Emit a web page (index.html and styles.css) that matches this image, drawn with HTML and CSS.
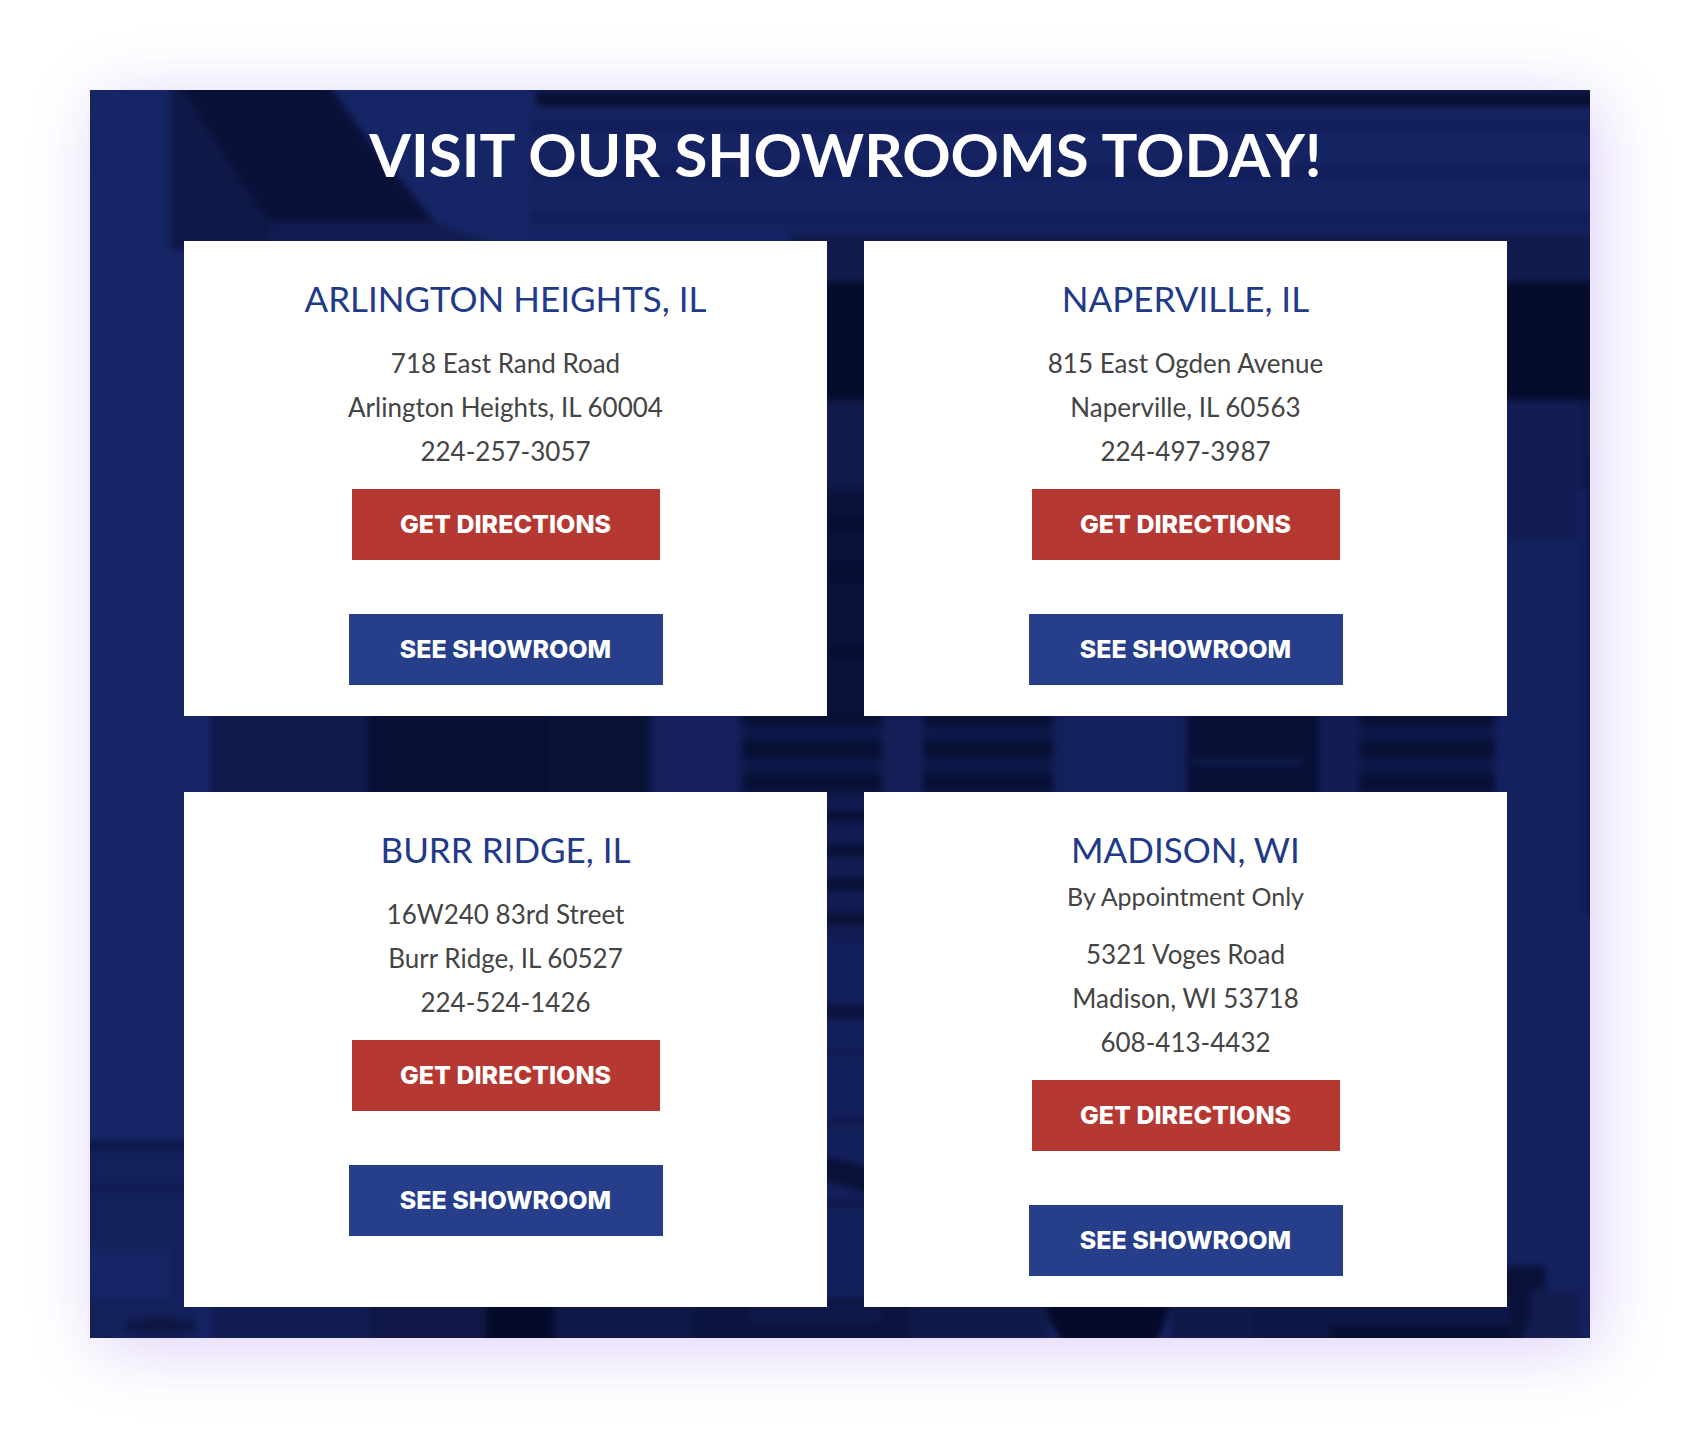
FILE: index.html
```html
<!doctype html>
<html lang="en">
  <head>
    <meta charset="UTF-8" />
    <meta name="viewport" content="width=device-width, initial-scale=1.0" />
    <title>Visit Our Showrooms Today!</title>
    <link rel="stylesheet" href="styles.css">
  </head>
  <body>
    <section class="showrooms">
      <!-- tinted storefront behind the cards -->
      <svg class="backdrop" viewBox="0 0 1500 1248" preserveAspectRatio="none" aria-hidden="true">
        <defs>
          <pattern id="siding" width="40" height="46" patternUnits="userSpaceOnUse">
            <rect width="40" height="46" fill="#152363" />
            <rect y="30" width="40" height="12" fill="#121e58" />
          </pattern>
          <pattern id="shutter" width="40" height="33" y="636" patternUnits="userSpaceOnUse">
            <rect width="40" height="33" fill="#0e1848" />
            <rect y="15" width="40" height="17" fill="#071034" />
          </pattern>
          <pattern id="blinds" width="40" height="34" y="702" patternUnits="userSpaceOnUse">
            <rect width="40" height="34" fill="#111c52" />
            <rect y="18" width="40" height="13" fill="#0a1239" />
          </pattern>
          <filter id="soft" x="0" y="0" width="1" height="1" color-interpolation-filters="sRGB">
            <feGaussianBlur stdDeviation="3" />
          </filter>
        </defs>
        <rect width="1500" height="1248" fill="#162566" />
        <g filter="url(#soft)">
          <rect x="-10" y="-10" width="1520" height="1268" fill="#162566" />
          <rect x="440" y="0" width="1070" height="150" fill="url(#siding)" />
          <rect x="443" y="-10" width="1070" height="14" fill="#111b50" />
          <rect x="446" y="3" width="1064" height="13" fill="#071030" />

          <!-- roof edge -->
          <rect x="80" y="-10" width="130" height="170" fill="#0f1948" />
          <path d="M86-10H236L278 50 345 132 180 134 150 90Z" fill="#0a1139" />
          <path d="M180 132H345L420 160H180Z" fill="#121c50" />

          <!-- right wall -->
          <rect x="700" y="143" width="810" height="50" fill="#111b4d" />
          <rect x="700" y="192" width="810" height="118" fill="#060c2c" />
          <rect x="700" y="310" width="810" height="90" fill="#101a4b" />
          <rect x="1400" y="310" width="90" height="140" fill="#121d54" />
          <rect x="1400" y="450" width="110" height="800" fill="#14215f" />
          <rect x="1494" y="365" width="16" height="460" fill="#0f1950" />

          <!-- centre -->
          <rect x="700" y="398" width="120" height="230" fill="#0a123c" />
          <rect x="700" y="426" width="120" height="16" fill="#060d30" />
          <rect x="700" y="470" width="120" height="24" fill="#070e34" />
          <rect x="700" y="554" width="120" height="14" fill="#070e32" />
          <rect x="700" y="702" width="120" height="150" fill="url(#blinds)" />
          <rect x="700" y="850" width="120" height="400" fill="#131f5b" />
          <rect x="700" y="914" width="120" height="15" fill="#0b143e" />
          <rect x="700" y="960" width="120" height="5" fill="#101a4e" />
          <rect x="700" y="1029" width="120" height="5" fill="#0e1748" />
          <path d="M700 1065L820 1100V1088L700 1058Z" fill="#080f36" />
          <path d="M700 1080L820 1116V1094L740 1072Z" fill="#0a1239" />
          <rect x="700" y="1110" width="120" height="6" fill="#0d1645" />

          <!-- windows between the rows -->
          <rect x="120" y="620" width="158" height="90" fill="#101b4b" />
          <rect x="278" y="620" width="282" height="90" fill="#070f34" />
          <rect x="460" y="620" width="100" height="90" fill="#091237" />
          <rect x="560" y="620" width="92" height="90" fill="#141f5b" />
          <rect x="652" y="620" width="140" height="90" fill="url(#shutter)" />
          <rect x="792" y="620" width="41" height="90" fill="#141f58" />
          <rect x="833" y="620" width="130" height="90" fill="url(#shutter)" />
          <rect x="963" y="620" width="134" height="90" fill="#13205c" />
          <rect x="1097" y="620" width="132" height="90" fill="#081036" />
          <rect x="1102" y="668" width="110" height="8" fill="#0f194a" />
          <rect x="1229" y="620" width="40" height="90" fill="#131d54" />
          <rect x="1269" y="620" width="136" height="90" fill="url(#shutter)" />

          <!-- street level -->
          <rect x="-10" y="1053" width="120" height="205" fill="#13205a" />
          <rect x="-10" y="1052" width="120" height="6" fill="#0b133f" />
          <rect x="-10" y="1096" width="120" height="4" fill="#0f194c" />
          <rect x="-10" y="1158" width="90" height="50" fill="#162565" />
          <rect x="120" y="1208" width="275" height="50" fill="#121d54" />
          <rect x="280" y="1208" width="116" height="50" fill="#0e1747" />
          <ellipse cx="70" cy="1236" rx="36" ry="8" fill="#0e1743" />
          <rect x="396" y="1208" width="68" height="50" fill="#050a2a" />
          <rect x="464" y="1208" width="140" height="50" fill="#0f1949" />
          <rect x="604" y="1208" width="215" height="50" fill="#0b1440" />
          <rect x="660" y="1212" width="130" height="20" fill="#0f1949" />
          <rect x="819" y="1208" width="140" height="50" fill="#0f1a4a" />
          <path d="M955 1208H1080Q1076 1240 1062 1258H980Q958 1240 955 1208Z" fill="#050a2a" />
          <rect x="1080" y="1208" width="85" height="50" fill="#0f194a" />
          <rect x="1165" y="1208" width="265" height="50" fill="#0d1746" />
          <rect x="1240" y="1236" width="180" height="22" fill="#070e33" />
          <path d="M1400 1176H1456V1196L1442 1220 1432 1258H1420V1208H1400Z" fill="#0a1239" />
          <rect x="1440" y="1200" width="50" height="58" fill="#121d50" />
        </g>
      </svg>

      <h1 class="heading">VISIT OUR SHOWROOMS TODAY!</h1>

      <div class="cards">
        <article class="card">
          <h2 class="city">ARLINGTON HEIGHTS, IL</h2>
          <address class="address">
            718 East Rand Road<br />
            Arlington Heights, IL 60004<br />
            224-257-3057
          </address>
          <a class="btn btn-directions" href="#">GET DIRECTIONS</a>
          <a class="btn btn-showroom" href="#">SEE SHOWROOM</a>
        </article>

        <article class="card">
          <h2 class="city">NAPERVILLE, IL</h2>
          <address class="address">
            815 East Ogden Avenue<br />
            Naperville, IL 60563<br />
            224-497-3987
          </address>
          <a class="btn btn-directions" href="#">GET DIRECTIONS</a>
          <a class="btn btn-showroom" href="#">SEE SHOWROOM</a>
        </article>

        <article class="card">
          <h2 class="city">BURR RIDGE, IL</h2>
          <address class="address">
            16W240 83rd Street<br />
            Burr Ridge, IL 60527<br />
            224-524-1426
          </address>
          <a class="btn btn-directions" href="#">GET DIRECTIONS</a>
          <a class="btn btn-showroom" href="#">SEE SHOWROOM</a>
        </article>

        <article class="card">
          <h2 class="city">MADISON, WI</h2>
          <p class="note">By Appointment Only</p>
          <address class="address">
            5321 Voges Road<br />
            Madison, WI 53718<br />
            608-413-4432
          </address>
          <a class="btn btn-directions" href="#">GET DIRECTIONS</a>
          <a class="btn btn-showroom" href="#">SEE SHOWROOM</a>
        </article>
      </div>
    </section>
  </body>
</html>
```

FILE: styles.css
```css
* {
  box-sizing: border-box;
}
body {
  margin: 0;
  padding: 90px 110px 110px 90px;
  background-color: #fff;
  font-family: Lato, sans-serif;
  color: #444;
}
.showrooms {
  position: relative;
  padding: 26px 83px 31px 94px;
  box-shadow: 8px 10px 64px rgba(112, 60, 220, 0.24);
}
.backdrop {
  position: absolute;
  inset: 0;
  width: 100%;
  height: 100%;
}
.heading {
  position: relative;
  margin: 0 0 49px;
  font-size: 60px;
  line-height: 76px;
  font-weight: 700;
  text-align: center;
  color: #fff;
}
.cards {
  position: relative;
  display: grid;
  grid-template-columns: 1fr 1fr;
  gap: 76px 37px;
}
.card {
  display: flex;
  flex-direction: column;
  align-items: center;
  padding: 35px 20px 31px;
  background-color: #fff;
  text-align: center;
}
.city {
  margin: 0;
  font-size: 35px;
  line-height: 44px;
  font-weight: 400;
  color: #1f3a88;
}
.note {
  margin: 10px 0 0;
  font-size: 25px;
  line-height: 30px;
}
.address {
  margin: 21px 0 16px;
  font-size: 26px;
  line-height: 44px;
  font-style: normal;
}
.btn {
  padding: 0 40px;
  font-family: Inter, sans-serif;
  font-size: 25px;
  line-height: 71px;
  font-weight: 800;
  color: #fff;
  text-decoration: none;
}
.btn-directions {
  min-width: 308px;
  margin-bottom: 54px;
  background-color: #b53832;
}
.btn-showroom {
  min-width: 314px;
  background-color: #273f8a;
}
```
